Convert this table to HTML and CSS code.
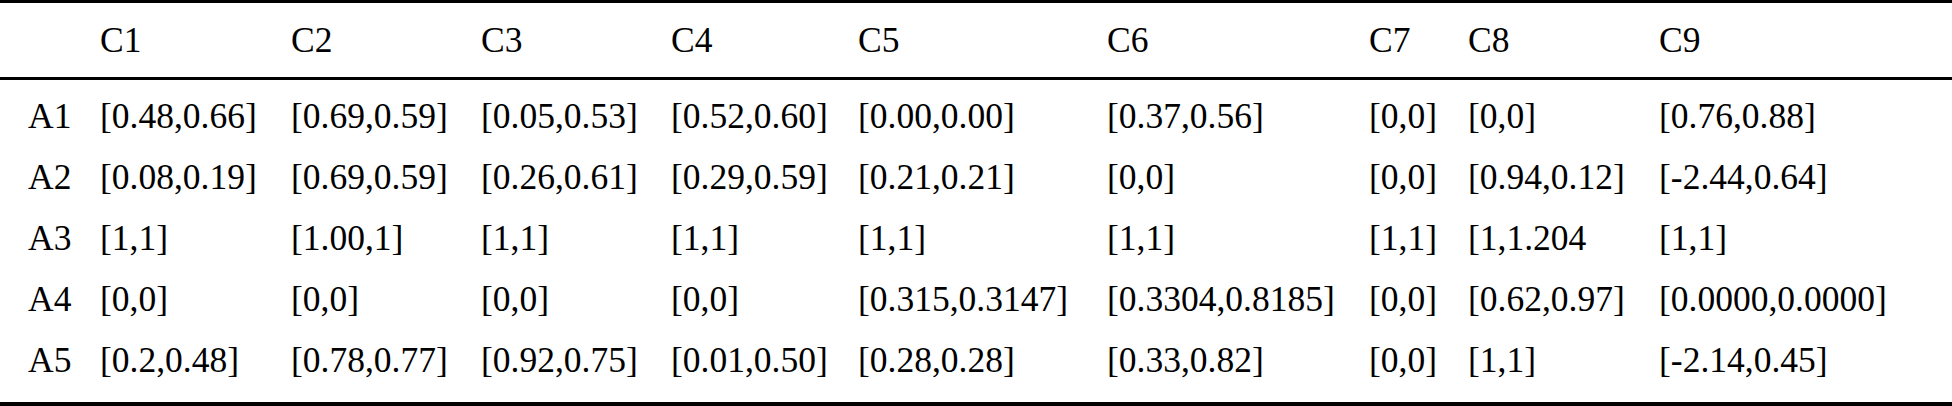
FILE: index.html
```html
<!DOCTYPE html>
<html lang="en">
<head>
  <meta charset="UTF-8">
  <title>Interval table</title>
  <meta name="viewport" content="width=device-width, initial-scale=1.0">
  <link rel="stylesheet" href="styles.css">
</head>
<body>
  <table class="grid">
    <colgroup>
      <col class="w-a">
      <col class="w-c1">
      <col class="w-c2">
      <col class="w-c3">
      <col class="w-c4">
      <col class="w-c5">
      <col class="w-c6">
      <col class="w-c7">
      <col class="w-c8">
      <col class="w-c9">
    </colgroup>
    <thead>
      <tr>
        <th></th>
        <th>C1</th>
        <th>C2</th>
        <th>C3</th>
        <th>C4</th>
        <th>C5</th>
        <th>C6</th>
        <th>C7</th>
        <th>C8</th>
        <th>C9</th>
      </tr>
    </thead>
    <tbody>
      <tr>
        <td>A1</td>
        <td>[0.48,0.66]</td>
        <td>[0.69,0.59]</td>
        <td>[0.05,0.53]</td>
        <td>[0.52,0.60]</td>
        <td>[0.00,0.00]</td>
        <td>[0.37,0.56]</td>
        <td>[0,0]</td>
        <td>[0,0]</td>
        <td>[0.76,0.88]</td>
      </tr>
      <tr>
        <td>A2</td>
        <td>[0.08,0.19]</td>
        <td>[0.69,0.59]</td>
        <td>[0.26,0.61]</td>
        <td>[0.29,0.59]</td>
        <td>[0.21,0.21]</td>
        <td>[0,0]</td>
        <td>[0,0]</td>
        <td>[0.94,0.12]</td>
        <td>[-2.44,0.64]</td>
      </tr>
      <tr>
        <td>A3</td>
        <td>[1,1]</td>
        <td>[1.00,1]</td>
        <td>[1,1]</td>
        <td>[1,1]</td>
        <td>[1,1]</td>
        <td>[1,1]</td>
        <td>[1,1]</td>
        <td>[1,1.204</td>
        <td>[1,1]</td>
      </tr>
      <tr>
        <td>A4</td>
        <td>[0,0]</td>
        <td>[0,0]</td>
        <td>[0,0]</td>
        <td>[0,0]</td>
        <td>[0.315,0.3147]</td>
        <td>[0.3304,0.8185]</td>
        <td>[0,0]</td>
        <td>[0.62,0.97]</td>
        <td>[0.0000,0.0000]</td>
      </tr>
      <tr>
        <td>A5</td>
        <td>[0.2,0.48]</td>
        <td>[0.78,0.77]</td>
        <td>[0.92,0.75]</td>
        <td>[0.01,0.50]</td>
        <td>[0.28,0.28]</td>
        <td>[0.33,0.82]</td>
        <td>[0,0]</td>
        <td>[1,1]</td>
        <td>[-2.14,0.45]</td>
      </tr>
    </tbody>
  </table>
</body>
</html>
```
FILE: styles.css
```css
body {
  margin: 0;
  background: #fff;
  color: #000;
  font-family: "Liberation Serif", "Times New Roman", serif;
}
.grid {
  width: 1952px;
  table-layout: fixed;
  border-collapse: collapse;
  border-top: 3px solid #000;
  border-bottom: 4px solid #000;
  font-size: 35.5px;
}
.w-a { width: 100px; }
.w-c1 { width: 191px; }
.w-c2 { width: 190px; }
.w-c3 { width: 190px; }
.w-c4 { width: 187px; }
.w-c5 { width: 249px; }
.w-c6 { width: 262px; }
.w-c7 { width: 99px; }
.w-c8 { width: 191px; }
.w-c9 { width: 293px; }
th, td {
  padding: 0;
  text-align: left;
  font-weight: normal;
  white-space: nowrap;
}
th:first-child, td:first-child {
  padding-left: 28px;
}
thead th {
  height: 74px;
  line-height: 74px;
  border-bottom: 3px solid #000;
}
tbody td {
  line-height: 61px;
}
tbody tr:first-child td {
  padding-top: 6px;
}
tbody tr:last-child td {
  padding-bottom: 11px;
}
```
